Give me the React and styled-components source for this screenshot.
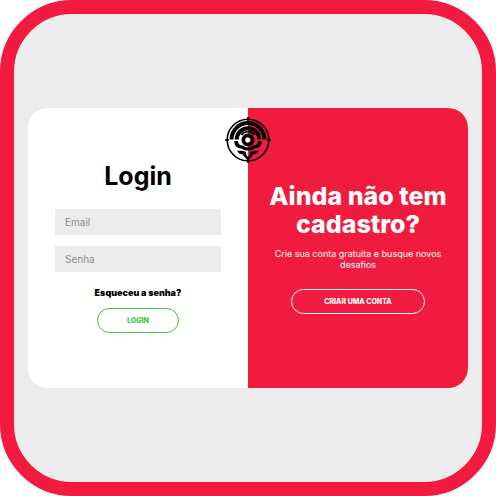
import React from "react";
import styled, { createGlobalStyle } from "styled-components";

const RED = "#f01b3e";

const GlobalStyle = createGlobalStyle`
  * { box-sizing: border-box; }
  body { margin: 0; background: #fff; font-family: Inter, "Open Sans", sans-serif; }
  h1, h2, p { margin: 0; }
`;

const Frame = styled.div`
  min-height: 100vh;
  display: flex;
  align-items: center;
  padding: 0 14px;
  border: 14px solid ${RED};
  border-radius: 72px;
  background: #ececec;
`;

const Card = styled.main`
  position: relative;
  flex: 1;
  display: grid;
  grid-template-columns: 1fr 1fr;
  min-height: 280px;
  border-radius: 20px;
  overflow: hidden;
  background: #fff;
`;

const Emblem = styled.svg`
  position: absolute;
  top: 9px;
  left: 50%;
  width: 46px;
  height: 46px;
  transform: translateX(-50%);
`;

const LoginPanel = styled.form`
  display: flex;
  flex-direction: column;
  align-items: center;
  padding: 54px 27px 0;
`;

const SignupPanel = styled.section`
  display: flex;
  flex-direction: column;
  align-items: center;
  padding: 74px 16px 0;
  background: ${RED};
  color: #fff;
  text-align: center;
`;

const LoginTitle = styled.h1`
  font-size: 25px;
  line-height: 28px;
  font-weight: 700;
`;

const SignupTitle = styled.h2`
  font-size: 25px;
  line-height: 28px;
  font-weight: 800;
`;

const Fields = styled.div`
  display: grid;
  gap: 11px;
  width: 100%;
  margin-top: 19px;
`;

const Field = styled.input`
  width: 100%;
  height: 26px;
  padding: 0 10px;
  border: 0;
  border-radius: 0;
  background: #ececec;
  font: 400 10px Inter, sans-serif;
  color: #222;
  &::placeholder { color: #8c8c8c; opacity: 1; }
`;

const ForgotLink = styled.a`
  margin-top: 14px;
  font-size: 9px;
  line-height: 14px;
  font-weight: 900;
  color: #000;
  text-decoration: none;
`;

const Pitch = styled.p`
  margin-top: 10px;
  font-size: 9px;
  line-height: 11px;
`;

const PillButton = styled.button`
  width: ${(p) => p.$width};
  height: 25px;
  margin-top: ${(p) => p.$gap};
  padding: 0;
  border: 1px solid ${(p) => p.$color};
  border-radius: 13px;
  background: transparent;
  color: ${(p) => p.$color};
  font: 800 7px Inter, sans-serif;
  cursor: pointer;
`;

function TargetEmblem() {
  return (
    <Emblem viewBox="0 0 46 46" role="img" aria-label="Alvo" fill="none" stroke="#000">
      <circle cx="23" cy="23" r="20.8" strokeWidth="1.6" />
      <path d="M23 0v4M23 42v4M0 23h4M42 23h4" strokeWidth="1.6" />
      <path d="M6.500 22.500a16.500 16.500 0 0 1 33 0" strokeWidth="4" />
      <path d="M11.700 22.500a11.300 11.300 0 0 1 22.600 0" strokeWidth="4" />
      <path d="M16.500 18a8 8 0 0 1 13 0" strokeWidth="1.800" />
      <circle cx="23" cy="23" r="4.600" strokeWidth="3.800" />
      <circle cx="23" cy="23" r="2.200" fill="#fff" stroke="none" />
      <path d="M9.300 24h3.700c0 3 2 4.500 5 4.500 1.500 1.300 3 2 5 2s3.500-.7 5-2c3 0 5-1.500 5-4.500h3.700c0 4.500-2.500 7.500-7.200 7.500-2 1.500-4 2-6.500 2s-4.500-.5-6.500-2c-4.700 0-7.200-3-7.200-7.500Z" fill="#000" stroke="none" />
      <path d="M12 33.500c4 .5 5.500-.5 9 1.500-.2 2.500.8 3.500 2 5 1.200-1.500 2.200-2.500 2-5 3.500-2 5-1 9-1.500-1.500 3-3.500 4-6 4-.5 2.500-3.500 3.500-5 6.500-1.500-3-4.500-4-5-6.500-2.500 0-4.500-1-6-4Z" fill="#000" stroke="none" />
    </Emblem>
  );
}

export default function App() {
  return (
    <>
      <GlobalStyle />
      <Frame>
        <Card>
          <LoginPanel onSubmit={(e) => e.preventDefault()}>
            <LoginTitle>Login</LoginTitle>
            <Fields>
              <Field type="email" placeholder="Email" aria-label="Email" />
              <Field type="password" placeholder="Senha" aria-label="Senha" />
            </Fields>
            <ForgotLink href="#senha">Esqueceu a senha?</ForgotLink>
            <PillButton type="submit" $width="82px" $gap="8px" $color="#3bc63b">LOGIN</PillButton>
          </LoginPanel>
          <SignupPanel>
            <SignupTitle>Ainda não tem cadastro?</SignupTitle>
            <Pitch>Crie sua conta gratuita e busque novos desafios</Pitch>
            <PillButton type="button" $width="134px" $gap="19px" $color="#fff">CRIAR UMA CONTA</PillButton>
          </SignupPanel>
          <TargetEmblem />
        </Card>
      </Frame>
    </>
  );
}
